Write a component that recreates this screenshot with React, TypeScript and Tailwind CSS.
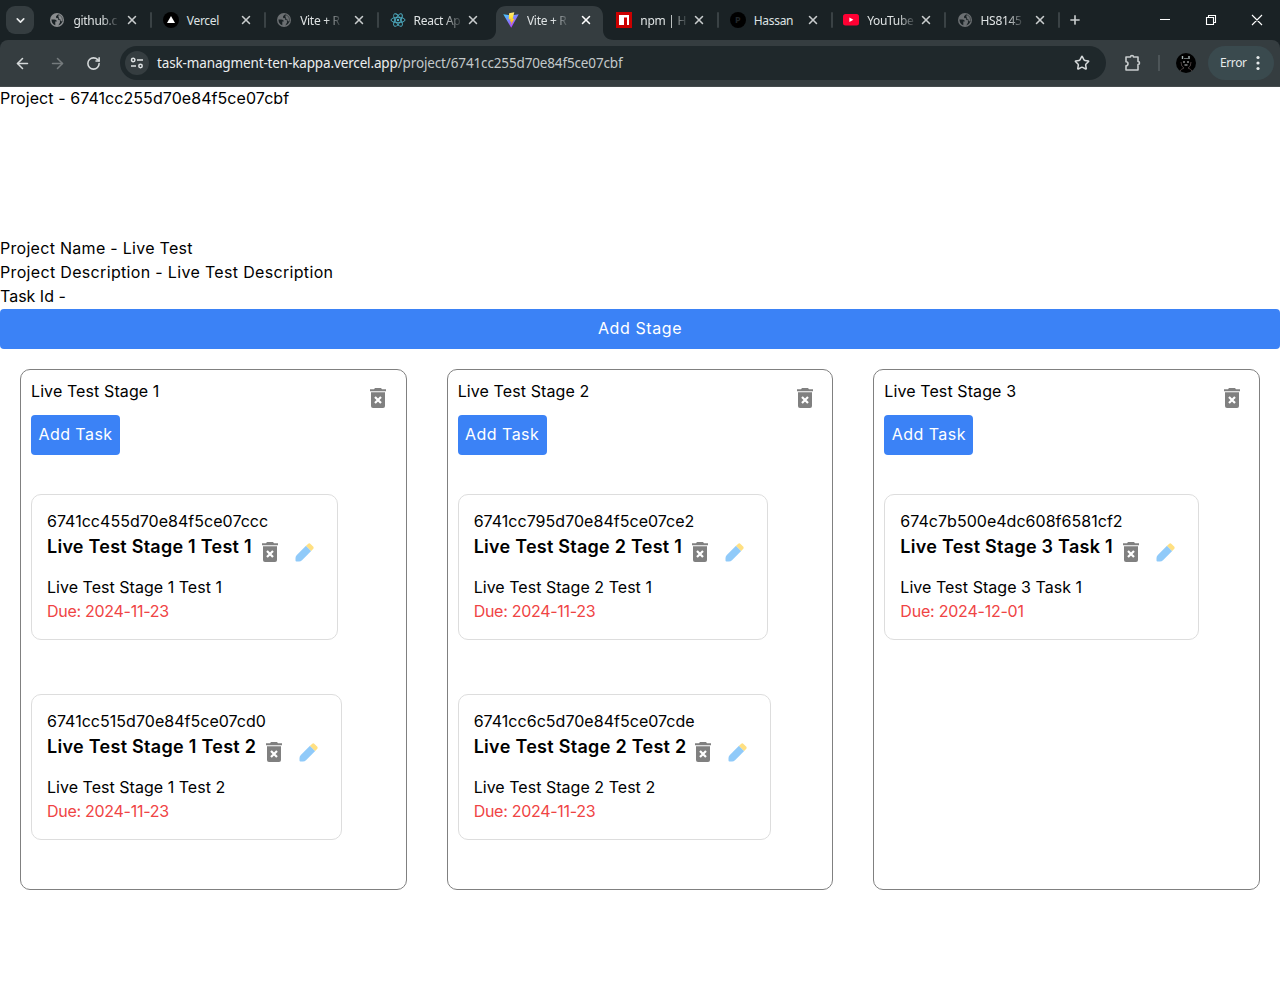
import { ReactNode } from "react";
import { ArrowLeft, ArrowRight, RotateCw, Star, X, Plus, ChevronDown } from "lucide-react";

const Globe = ({ c }: { c: string }) => (
  <svg width="14" height="14" viewBox="0 0 14 14">
    <circle cx="7" cy="7" r="7" fill={c} />
    <path d="M1.400 6.600H4.500Q6.800 6.600 6.800 8.600H5.300V12.200Q1.800 11.200 1.400 6.600z" fill="#1a2225" />
    <path d="M8.300 1.500V3H6.500V4.800H8.600V6.600H10.300V8.600H12.300Q13.200 3.200 8.300 1.500z" fill="none" stroke="#1a2225" strokeWidth="0.500" />
    <path d="M8 1.600L6.300 3.200V5H8.300V6.800L10 7V9.600L8.300 12.400Q11.500 11.700 12.500 8.500L11 8.600L9.500 6.500L8.500 4.200z" fill="#1a2225" />
  </svg>
);
const Vercel = () => (
  <svg width="16" height="16" viewBox="0 0 16 16"><circle cx="8" cy="8" r="8" fill="#000" /><path d="M8 4l4 7H4z" fill="#fff" /></svg>
);
const ReactLogo = () => (
  <svg width="16" height="16" viewBox="0 0 16 16" fill="none" stroke="#4fb0c6" strokeWidth="0.9">
    <ellipse cx="8" cy="8" rx="7" ry="2.7" />
    <ellipse cx="8" cy="8" rx="7" ry="2.7" transform="rotate(60 8 8)" />
    <ellipse cx="8" cy="8" rx="7" ry="2.7" transform="rotate(120 8 8)" />
    <circle cx="8" cy="8" r="1.2" fill="#4fb0c6" stroke="none" />
  </svg>
);
const Vite = () => (
  <svg width="16" height="16" viewBox="0 0 16 16">
    <defs>
      <linearGradient id="v1" x1="0" y1="0" x2="0.7" y2="1"><stop stopColor="#41d1ff" /><stop offset="1" stopColor="#bd34fe" /></linearGradient>
      <linearGradient id="v2" x1="0" y1="0" x2="0" y2="1"><stop stopColor="#ffea83" /><stop offset="0.4" stopColor="#ffdd35" /><stop offset="1" stopColor="#ffa800" /></linearGradient>
    </defs>
    <path d="M0.3 2.2L8 3.5L15.7 2.2L8.2 15.7z" fill="url(#v1)" />
    <path d="M11.3 0.2L6.1 1.2L5.7 7.4L7.6 7L7 9.8L8.6 9.4L7.7 13.4L11.4 6.8L9.7 7.1z" fill="url(#v2)" />
  </svg>
);
const Npm = () => (
  <svg width="16" height="16" viewBox="0 0 16 16"><path d="M0 0h16v16H0z" fill="#cb0000" /><path d="M3 3h10v10h-2V5.500H8V13H3z" fill="#fff" /></svg>
);
const PIcon = () => (
  <span className="flex h-4 w-4 items-center justify-center rounded-full bg-black text-[9px] font-bold text-[#22282b]">P</span>
);
const YouTube = () => (
  <svg width="16" height="12" viewBox="0 0 16 12"><rect width="16" height="11.500" rx="2.500" fill="#ff0033" /><path d="M6.400 3.500v4.500l4-2.250z" fill="#fff" /></svg>
);

const tabs: { icon: ReactNode; title: string; active?: boolean; line?: boolean; fade?: boolean }[] = [
  { icon: <Globe c="#8a8d8f" />, title: "github.c", line: true, fade: true },
  { icon: <Vercel />, title: "Vercel", line: true },
  { icon: <Globe c="#6b6f72" />, title: "Vite + R", line: true, fade: true },
  { icon: <ReactLogo />, title: "React Ap", fade: true },
  { icon: <Vite />, title: "Vite + R", active: true, fade: true },
  { icon: <Npm />, title: "npm | H", line: true, fade: true },
  { icon: <PIcon />, title: "Hassan", line: true },
  { icon: <YouTube />, title: "YouTube", line: true, fade: true },
  { icon: <Globe c="#6b6f72" />, title: "HS8145", line: true, fade: true },
];

const Tab = ({ icon, title, active, line, fade }: (typeof tabs)[number]) => (
  <div className="relative h-full w-[113.4px] shrink-0 pt-[6px]">
    {active && (
      <svg className="absolute top-[6px] -left-[10px]" width="130" height="34" viewBox="0 0 130 34">
        <path d="M0 34C7 34 11 30 11 24V10C11 4 15 0 21 0H108C114 0 118 4 118 10V24C118 30 122 34 129 34z" fill="#353d40" />
      </svg>
    )}
    <div className="relative flex h-[28px] items-center pl-[8px]">
      <span className="flex w-4 shrink-0 justify-center">{icon}</span>
      <span className="ml-[8px] w-[44px] shrink-0 text-[12px] tracking-[-0.3px] whitespace-nowrap text-[#dfe3e4]">
        <span className={"pt-px " + (fade ? "inline-block [mask-image:linear-gradient(to_right,#000_65%,#0003_98%)]" : "inline-block")}>
          {title}
        </span>
      </span>
      <X className={"ml-[8px] shrink-0 " + (active ? "text-white" : "text-[#c8cccd]")} size={14} strokeWidth={2.6} />
      {line && <i className="ml-[11px] h-4 w-[2px] shrink-0 rounded bg-[#3a4245]" />}
    </div>
  </div>
);

const Browser = () => (
  <header className="h-[87px] bg-[#1a2225] font-['Noto_Sans','Open_Sans',sans-serif]">
    <div className="flex h-10">
      <div className="mt-[6px] ml-[6px] flex h-7 w-7 items-center justify-center rounded-[9px] bg-[#353d40]">
        <ChevronDown size={13} strokeWidth={3} className="text-[#e8eaeb]" />
      </div>
      <div className="ml-[7.4px] flex h-10">{tabs.map((t, i) => <Tab key={i} {...t} />)}</div>
      <Plus className="mt-[13px] ml-[5.6px] text-[#c8cccd]" size={14} strokeWidth={2.8} />
      <svg className="mt-[13px] mr-[16px] ml-auto" width="106" height="14" viewBox="0 0 106 14" fill="none" stroke="#fff" strokeWidth="1.1">
        <path d="M2 6.500h10M48.500 4.500h7v7h-7zM50.500 4.500v-2h7v7h-2M94 2l10 10M104 2l-10 10" />
      </svg>
    </div>
    <div className="flex h-[47px] items-center rounded-t-[8px] border-b border-[#454b4d] bg-[#353d40]">
      <ArrowLeft className="ml-[14px] text-[#d5d9da]" size={17} strokeWidth={2.2} />
      <ArrowRight className="ml-[18px] text-[#757b7d]" size={17} strokeWidth={2.2} />
      <RotateCw className="ml-[20px] text-[#d5d9da]" size={15} strokeWidth={2.5} />
      <div className="ml-[19px] flex h-[34px] w-[986px] items-center rounded-full bg-[#1f282b] pl-[5px]">
        <div className="flex h-6 w-6 items-center justify-center rounded-full bg-[#353d40]">
          <svg width="14" height="12" viewBox="0 0 14 12" fill="none" stroke="#dfe3e4" strokeWidth="1.500">
            <circle cx="3.200" cy="3" r="1.700" /><path d="M7 3h6M1 9h5" /><circle cx="10.500" cy="9" r="1.700" />
          </svg>
        </div>
        <p className="ml-[8px] pt-px text-[13.5px] tracking-[-0.14px] whitespace-nowrap text-[#c3c8ca]">
          <span className="text-[#eceeef]">task-managment-ten-kappa.vercel.app</span>/project/6741cc255d70e84f5ce07cbf
        </p>
        <Star className="mr-[16px] ml-auto text-[#d5d9da]" size={16} strokeWidth={2.3} />
      </div>
      <svg className="ml-[18px]" width="18" height="18" viewBox="0 0 18 18" fill="none" stroke="#c8cccd" strokeWidth="1.600" strokeLinejoin="round">
        <path d="M2 3h4.500a1.500 1.500 0 0 1 3 0H14v4.500a1.500 1.500 0 0 1 0 3V16H2v-4.300a2 2 0 0 0 0-4z" />
      </svg>
      <i className="ml-[16px] h-4 w-[2px] bg-[#4d5558]" />
      <svg className="ml-[16px]" width="20" height="20" viewBox="0 0 20 20">
        <circle cx="10" cy="10" r="10" fill="#000" />
        <path d="M6.500 3v3M13 3v3" stroke="#a7b4b5" strokeWidth="1.400" fill="none" />
        <path d="M8 5.500h4" stroke="#6a7373" />
        <path d="M7 9h2M11 9h2M8.500 12h3" stroke="#ccc" />
        <path d="M5 9Q5 14 8 15Q5 16 4 18M15 9Q15 14 12 15Q15 16 16 18" stroke="#493f3f" fill="none" />
      </svg>
      <div className="ml-[12px] flex h-[34px] w-[66px] items-center rounded-full bg-[#3a4a4e] pl-[12px] text-[12px] tracking-[-0.4px] text-[#e6eaeb]">
        <span className="w-[36px]">Error</span>
        <svg width="4" height="16" viewBox="0 0 4 16" fill="#e6eaeb">
          <circle cx="2" cy="2.500" r="1.600" /><circle cx="2" cy="8" r="1.600" /><circle cx="2" cy="13.500" r="1.600" />
        </svg>
      </div>
    </div>
  </header>
);

const Trash = () => (
  <svg width="16" height="20" viewBox="0 0 16 20" className="shrink-0">
    <path d="M0 1.200H4L5 0h6l1 1.200h4v2H0z" fill="#808080" />
    <path d="M1 4.200h14V18a2 2 0 0 1-2 2H3a2 2 0 0 1-2-2z" fill="#808080" />
    <path d="M5 9l6 6M11 9l-6 6" stroke="#fff" strokeWidth="2.200" />
  </svg>
);
const Pencil = () => (
  <svg width="19" height="19" viewBox="0 0 19 19" className="mt-[0.5px] shrink-0">
    <path d="M11 2.800L16.200 8L7 17.200Q5.700 18.500 4 18.500H1.500Q0.500 18.500 0.500 17.500V15Q0.500 13.300 1.800 12z" fill="#90caf9" />
    <path d="M11 2.800L13 .9Q14.300 -.2 15.500 .9L18.100 3.500Q19.200 4.700 18.100 6L16.200 8z" fill="#ffe082" />
  </svg>
);

type Task = { id: string; title: string; due: string; w: string; tracking: string; dueTracking: string };
const stages: { name: string; tasks: Task[] }[] = [
  {
    name: "Live Test Stage 1",
    tasks: [
      { id: "6741cc455d70e84f5ce07ccc", title: "Live Test Stage 1 Test 1", due: "2024-11-23", w: "w-[307px]", tracking: "tracking-[0.25px]", dueTracking: "tracking-[-0.28px]" },
      { id: "6741cc515d70e84f5ce07cd0", title: "Live Test Stage 1 Test 2", due: "2024-11-23", w: "w-[310.5px]", tracking: "tracking-[0.29px]", dueTracking: "tracking-[-0.28px]" },
    ],
  },
  {
    name: "Live Test Stage 2",
    tasks: [
      { id: "6741cc795d70e84f5ce07ce2", title: "Live Test Stage 2 Test 1", due: "2024-11-23", w: "w-[310px]", tracking: "tracking-[0.25px]", dueTracking: "tracking-[-0.28px]" },
      { id: "6741cc6c5d70e84f5ce07cde", title: "Live Test Stage 2 Test 2", due: "2024-11-23", w: "w-[313.5px]", tracking: "tracking-[0.29px]", dueTracking: "tracking-[-0.28px]" },
    ],
  },
  {
    name: "Live Test Stage 3",
    tasks: [
      { id: "674c7b500e4dc608f6581cf2", title: "Live Test Stage 3 Task 1", due: "2024-12-01", w: "w-[314.5px]", tracking: "tracking-[0.26px]", dueTracking: "tracking-[-0.22px]" },
    ],
  },
];

const Card = ({ t }: { t: Task }) => (
  <article className={"mb-[54px] h-[146px] rounded-[10px] border border-[#dddddd] px-[15px] pt-[14px] whitespace-nowrap " + t.w}>
    <p className="tracking-[0.03px]">{t.id}</p>
    <div className="flex h-[42px]">
      <h3 className={"text-[18px] leading-[28px] font-semibold " + t.tracking}>{t.title}</h3>
      <div className="mt-[9px] mr-[8px] ml-auto flex gap-[17px]"><Trash /><Pencil /></div>
    </div>
    <p className="tracking-[0.03px]">{t.title}</p>
    <p className={"text-[#ef4444] " + t.dueTracking}>Due: {t.due}</p>
  </article>
);

export default function App() {
  return (
    <div className="min-h-[984px] bg-white text-black">
      <Browser />
      <main className="font-['Inter','Open_Sans',sans-serif] text-[16px] leading-6">
        <div className="h-[222px]">
          <p className="h-[149px] leading-[22px] tracking-[0.07px]">Project - 6741cc255d70e84f5ce07cbf</p>
          <p className="tracking-[0.29px]">Project Name - Live Test</p>
          <p className="tracking-[0.33px]">Project Description - Live Test Description</p>
          <p>Task Id -</p>
        </div>
        <button className="block h-10 w-full rounded bg-[#3b82f6] pb-[2px] tracking-[0.6px] text-white">Add Stage</button>
        <div className="grid grid-cols-3 gap-10 p-5">
          {stages.map((s) => (
            <section key={s.name} className="h-[521px] rounded-[10px] border border-[#808080] p-[10px]">
              <div className="flex h-[35px] justify-between">
                <h2 className="leading-[22px] tracking-[0.1px]">{s.name}</h2>
                <div className="mt-[8px] mr-[9.2px]"><Trash /></div>
              </div>
              <button className="mb-[39px] h-10 w-[89px] rounded bg-[#3b82f6] pb-[2px] tracking-[0.45px] text-white">Add Task</button>
              {s.tasks.map((t) => <Card key={t.id} t={t} />)}
            </section>
          ))}
        </div>
      </main>
    </div>
  );
}
